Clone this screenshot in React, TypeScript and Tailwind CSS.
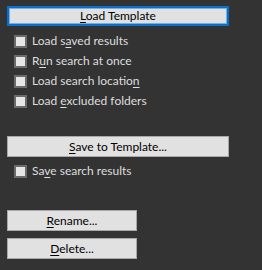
const font = { fontFamily: 'Lato, "Noto Sans", sans-serif' };

function Key({ children }: { children: string }) {
  return <span className="underline underline-offset-[2px]">{children}</span>;
}

function Check({ children }: { children: React.ReactNode }) {
  return (
    <div className="flex h-[20px] items-start pl-[14px] pt-[3px]">
      <span className="h-[13px] w-[13px] shrink-0 border-2 border-[#6b6b6b] bg-[#e6e6e6]" />
      <span className="ml-[5px] -mt-[3px] text-[12px] leading-[18px] text-[#dedede]">{children}</span>
    </div>
  );
}

function Btn({ children, wide, focused }: { children: React.ReactNode; wide?: boolean; focused?: boolean }) {
  return (
    <div
      className={
        (wide ? "w-[222px] " : "w-[130px] ") +
        (focused
          ? "h-[20px] border-2 border-[#0a6fc9] shadow-[inset_0_0_0_1px_#6fb0e8] "
          : "h-[21px] border border-[#a8a8a8] ") +
        "flex items-center justify-center bg-[#e1e1e1] text-[12px] text-black"
      }
    >
      {children}
    </div>
  );
}

export default function App() {
  return (
    <div className="h-[270px] w-[262px] bg-[#333333] pl-[7px] pt-[6px]" style={font}>
      <Btn wide focused>
        <span><Key>L</Key>oad Template</span>
      </Btn>
      <div className="mt-[6px] -ml-[7px]">
        <Check>Load s<Key>a</Key>ved results</Check>
        <Check>R<Key>u</Key>n search at once</Check>
        <Check>Load search locatio<Key>n</Key></Check>
        <Check>Load <Key>e</Key>xcluded folders</Check>
      </div>
      <div className="mt-[24px]">
        <Btn wide>
          <span><Key>S</Key>ave to Template...</span>
        </Btn>
      </div>
      <div className="mt-[5px] -ml-[7px]">
        <Check>Sa<Key>v</Key>e search results</Check>
      </div>
      <div className="mt-[28px]">
        <Btn>
          <span><Key>R</Key>ename...</span>
        </Btn>
      </div>
      <div className="mt-[7px]">
        <Btn>
          <span><Key>D</Key>elete...</span>
        </Btn>
      </div>
    </div>
  );
}
